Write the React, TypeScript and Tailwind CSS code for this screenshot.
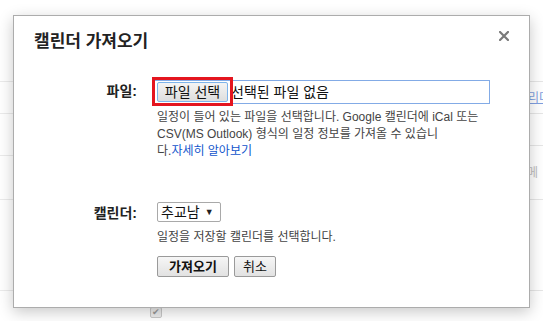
import React from 'react';

const font = { fontFamily: '"Liberation Sans", Arial, "Noto Sans CJK KR", sans-serif' };

const CloseIcon = () => (
  <svg width="10" height="10" viewBox="0 0 10 10" className="block">
    <path d="M1 1L9 9M9 1L1 9" stroke="#7a7a7a" strokeWidth="2.2" strokeLinecap="square" />
  </svg>
);

export default function App() {
  return (
    <div className="relative w-[543px] h-[321px] overflow-hidden bg-white text-[#222]" style={font}>
      {/* page behind the dialog */}
      <div className="flex h-full">
        <div className="w-[13px] flex flex-col">
          <div className="h-[82px] border-b border-[#ebebeb]" />
          <div className="h-[32px] border-b border-[#ebebeb]" />
          <div className="h-[42px] border-b border-[#ebebeb]" />
          <div className="h-[44px] border-b border-[#ebebeb]" />
          <div className="h-[91px] border-b border-[#ebebeb]" />
        </div>
        <div className="flex-1 flex flex-col">
          <div className="h-[307px]" />
          <div className="ml-[137px] w-[12px] h-[11px] rounded-[2px] border border-[#c8c8c8] bg-[#ececec] flex items-center justify-center text-[9px] leading-none text-[#9a9a9a]">
            ✔
          </div>
        </div>
        <div className="w-[14px] flex flex-col overflow-hidden">
          <div className="h-[82px] border-b border-[#e6e6e6]" />
          <div className="h-[32px] border-b border-[#e6e6e6] flex items-center -ml-[1px]">
            <span className="text-[12px] leading-[14px] text-[#7f9fe0] underline whitespace-nowrap">리더</span>
          </div>
          <div className="h-[32px] border-b border-[#e6e6e6]" />
          <div className="h-[54px] border-b border-[#e6e6e6] flex items-center -ml-[2px]">
            <span className="text-[12px] leading-[14px] text-[#bdbdbd] whitespace-nowrap">메</span>
          </div>
          <div className="h-[91px] border-b border-[#e6e6e6]" />
        </div>
      </div>

      {/* dialog */}
      <div className="absolute left-[13px] top-[15px] w-[517px] h-[293px] bg-white border border-[#acacac] shadow-[0_4px_14px_rgba(0,0,0,0.22)]">
        <div className="relative pl-[20px] pt-[16px]">
          <h2 className="text-[17px] leading-[20px] font-bold text-[#222]">캘린더 가져오기</h2>
          <button className="absolute right-[20px] top-[15px]">
            <CloseIcon />
          </button>
        </div>

        <div className="mt-[28px] grid grid-cols-[123px_1fr] gap-x-[20px]">
          {/* file row */}
          <div className="pt-[3px] text-right text-[14px] leading-[16px] font-bold text-[#222]">파일:</div>
          <div>
            <div className="relative -ml-[3px] w-[336px] h-[24px] border border-[#83abe6] flex items-center">
              <div className="ml-[2px] w-[71px] h-[20px] border border-[#7eb4ea] rounded-[2px] bg-gradient-to-b from-[#f4f4f4] to-[#dedede] flex items-center justify-center text-[14px] leading-none text-[#111]">
                파일 선택
              </div>
              <span className="ml-[3px] text-[14px] leading-none text-[#111]">선택된 파일 없음</span>
              <div className="absolute -left-[3px] -top-[4px] w-[81px] h-[29px] border-[3px] border-[#e4151f]" />
            </div>
            <div className="mt-[5px] text-[12px] leading-[17px] text-[#444] whitespace-nowrap">
              <div>일정이 들어 있는 파일을 선택합니다. Google 캘린더에 iCal 또는</div>
              <div>CSV(MS Outlook) 형식의 일정 정보를 가져올 수 있습니</div>
              <div>
                다.<a className="text-[#1155cc]">자세히 알아보기</a>
              </div>
            </div>
          </div>

          {/* calendar row */}
          <div className="mt-[42px] pt-[3px] text-right text-[14px] leading-[16px] font-bold text-[#222]">캘린더:</div>
          <div className="mt-[42px]">
            <div className="w-[64px] h-[20px] border border-[#a9a9a9] rounded-[2px] flex items-center pl-[3px] gap-[5px]">
              <span className="text-[14px] leading-none text-[#111]">추교남</span>
              <span className="text-[9px] leading-none text-[#222]">▼</span>
            </div>
            <div className="mt-[7px] text-[12px] leading-[17px] text-[#444]">일정을 저장할 캘린더를 선택합니다.</div>
            <div className="mt-[10px] flex gap-[5px]">
              <button className="w-[72px] h-[21px] border border-[#9a9a9a] rounded-[2px] bg-gradient-to-b from-[#f6f6f6] to-[#e2e2e2] text-[13px] leading-none font-bold text-[#111]">
                가져오기
              </button>
              <button className="w-[42px] h-[21px] border border-[#9a9a9a] rounded-[2px] bg-gradient-to-b from-[#f6f6f6] to-[#e2e2e2] text-[13px] leading-none text-[#111]">
                취소
              </button>
            </div>
          </div>
        </div>
      </div>
    </div>
  );
}
